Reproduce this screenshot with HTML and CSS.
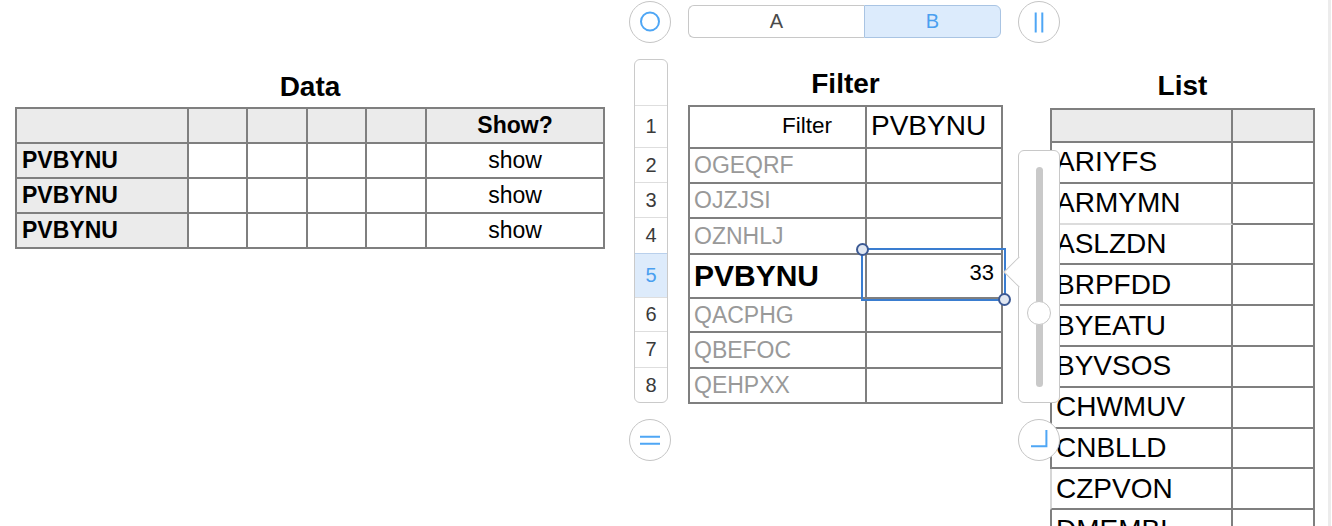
FILE: index.html
```html
<!DOCTYPE html>
<html lang="en">
<head>
<meta charset="utf-8">
<title>Data / Filter / List</title>
<link rel="stylesheet" href="styles.css">
</head>
<body>
<div class="screen">
  <section class="data-col">
    <h2 class="title">Data</h2>
    <div class="data-table">
      <div class="cell shade"></div><div class="cell shade"></div><div class="cell shade"></div><div class="cell shade"></div><div class="cell shade"></div><div class="cell shade bold center">Show?</div>
      <div class="cell shade bold">PVBYNU</div><div class="cell"></div><div class="cell"></div><div class="cell"></div><div class="cell"></div><div class="cell center">show</div>
      <div class="cell shade bold">PVBYNU</div><div class="cell"></div><div class="cell"></div><div class="cell"></div><div class="cell"></div><div class="cell center">show</div>
      <div class="cell shade bold">PVBYNU</div><div class="cell"></div><div class="cell"></div><div class="cell"></div><div class="cell"></div><div class="cell center">show</div>
    </div>
  </section>

  <section class="editor">
    <div class="toolbar">
      <button class="round" type="button" aria-label="Circle">
        <svg width="40" height="40" viewBox="1 1 40 40"><circle cx="21" cy="20.5" r="9" fill="none" stroke="#4ea6f5" stroke-width="2"/></svg>
      </button>
      <div class="segmented">
        <span class="seg seg-a">A</span>
        <span class="seg seg-b">B</span>
      </div>
      <button class="round" type="button" aria-label="Columns">
        <svg width="40" height="40" viewBox="1 1 40 40"><path d="M17.7 11.5 V31.5 M24.3 11.5 V31.5" stroke="#4ea6f5" stroke-width="2" fill="none"/></svg>
      </button>
    </div>

    <div class="workspace">
      <div class="gutter">
        <div class="g-head"></div>
        <div class="g-row">1</div>
        <div class="g-row">2</div>
        <div class="g-row">3</div>
        <div class="g-row">4</div>
        <div class="g-row active">5</div>
        <div class="g-row">6</div>
        <div class="g-row">7</div>
        <div class="g-row">8</div>
      </div>

      <div class="filter-col">
        <h2 class="title">Filter</h2>
        <div class="filter-table">
          <div class="f-cell label">Filter</div>
          <div class="f-cell query">PVBYNU</div>
          <div class="f-cell">OGEQRF</div><div class="f-cell"></div>
          <div class="f-cell">OJZJSI</div><div class="f-cell"></div>
          <div class="f-cell">OZNHLJ</div><div class="f-cell"></div>
          <div class="f-cell match">PVBYNU</div><div class="f-cell value">33</div>
          <div class="f-cell">QACPHG</div><div class="f-cell"></div>
          <div class="f-cell">QBEFOC</div><div class="f-cell"></div>
          <div class="f-cell">QEHPXX</div><div class="f-cell"></div>
          <div class="selection">
            <span class="handle handle-tl"></span>
            <span class="handle handle-br"></span>
          </div>
        </div>
      </div>

      <div class="popover">
        <span class="popover-arrow"></span>
        <div class="track"></div>
        <span class="thumb"></span>
      </div>
    </div>

    <div class="bottombar">
      <button class="round" type="button" aria-label="Rows">
        <svg width="40" height="40" viewBox="1 1 40 40"><path d="M11 17.7 H31 M11 24.7 H31" stroke="#4ea6f5" stroke-width="2" fill="none"/></svg>
      </button>
      <button class="round" type="button" aria-label="Resize">
        <svg width="40" height="40" viewBox="1 1 40 40"><path d="M28.4 11 V27.2 H13" stroke="#4ea6f5" stroke-width="2" fill="none"/></svg>
      </button>
    </div>
  </section>

  <section class="list-col">
    <h2 class="title">List</h2>
    <div class="list-table">
      <div class="l-cell first head"></div><div class="l-cell head"></div>
      <div class="l-cell first">ARIYFS</div><div class="l-cell"></div>
      <div class="l-cell first faint-bottom">ARMYMN</div><div class="l-cell"></div>
      <div class="l-cell first">ASLZDN</div><div class="l-cell"></div>
      <div class="l-cell first">BRPFDD</div><div class="l-cell"></div>
      <div class="l-cell first">BYEATU</div><div class="l-cell"></div>
      <div class="l-cell first">BYVSOS</div><div class="l-cell"></div>
      <div class="l-cell first">CHWMUV</div><div class="l-cell"></div>
      <div class="l-cell first">CNBLLD</div><div class="l-cell"></div>
      <div class="l-cell first faint-left">CZPVON</div><div class="l-cell"></div>
      <div class="l-cell first">DMEMBL</div><div class="l-cell"></div>
    </div>
  </section>

  <div class="scroll-strip"></div>
</div>
</body>
</html>
```

FILE: styles.css
```css
* { box-sizing: border-box; }

html, body {
  margin: 0;
  padding: 0;
  background: #fff;
}

body {
  font-family: "Liberation Sans", Arial, Helvetica, sans-serif;
  color: #000;
}

.screen {
  display: flex;
  align-items: flex-start;
  width: 1332px;
  height: 526px;
  overflow: hidden;
}

.title {
  margin: 0;
  height: 32px;
  line-height: 32px;
  font-size: 28px;
  font-weight: 700;
  text-align: center;
}

/* ---------- Data ---------- */
.data-col {
  flex: none;
  width: 590px;
  margin-left: 15px;
  padding-top: 71px;
}
.data-col .title { margin-bottom: 4px; }

.data-table {
  display: grid;
  grid-template-columns: 170px 57px 58px 57px 58px 176px;
  grid-auto-rows: 33px;
  gap: 2px;
  padding: 2px;
  background: #7f7f7f;
}
.cell {
  background: #fff;
  display: flex;
  align-items: center;
  padding-left: 5px;
  font-size: 23px;
  white-space: nowrap;
}
.cell.shade { background: #ebebeb; }
.cell.bold { font-weight: 700; }
.cell.center { justify-content: center; padding-left: 0; }

/* ---------- Editor ---------- */
.editor {
  flex: none;
  width: 374px;
  margin-left: 24px;
  display: flex;
  flex-direction: column;
  align-items: flex-start;
  position: relative;
  z-index: 2;
}

.toolbar {
  flex: none;
  width: 431px;
  height: 43px;
  display: flex;
  align-items: center;
}

.round {
  flex: none;
  width: 42px;
  height: 42px;
  padding: 0;
  border-radius: 50%;
  border: 1px solid #c5c5c5;
  background: #fff;
  display: flex;
  align-items: center;
  justify-content: center;
}
.round svg { display: block; }

.segmented {
  flex: none;
  display: flex;
  height: 33px;
  margin-left: 17px;
  margin-right: 17px;
  font-size: 20px;
}
.seg {
  display: flex;
  align-items: center;
  justify-content: center;
  height: 33px;
}
.seg-a {
  width: 176px;
  border: 1px solid #c8c8c8;
  border-right: none;
  border-radius: 6px 0 0 6px;
  background: #fff;
  color: #4a4a4a;
}
.seg-b {
  width: 137px;
  border: 1px solid #a9c4e3;
  border-radius: 0 6px 6px 0;
  background: #dcebfc;
  color: #4a9ff0;
}

.workspace {
  flex: none;
  display: flex;
  align-items: flex-start;
  margin-top: 16px;
}

.gutter {
  flex: none;
  width: 34px;
  margin-left: 5px;
  display: grid;
  grid-template-rows: 45px 42px 35px 35px 36px 44px 34px 36px 35px;
  border: 1px solid #cacaca;
  border-radius: 6px;
  overflow: hidden;
  background: #fff;
}
.g-row {
  display: flex;
  align-items: center;
  justify-content: center;
  border-top: 1px solid #dedede;
  font-size: 20px;
  color: #3a3a3a;
}
.g-row.active {
  background: #ddebfb;
  color: #4a9ff0;
  border-top-color: #b9d0ec;
}

.filter-col {
  flex: none;
  width: 315px;
  margin-left: 20px;
  padding-top: 9px;
}
.filter-col .title { margin-bottom: 5px; }

.filter-table {
  position: relative;
  display: grid;
  grid-template-columns: 175px 134px;
  grid-template-rows: 40px 33px 33px 34px 42px 32px 34px 33px;
  gap: 2px;
  padding: 2px;
  background: #7f7f7f;
}
.f-cell {
  background: #fff;
  display: flex;
  align-items: center;
  padding-left: 4px;
  font-size: 23px;
  color: #999;
  white-space: nowrap;
}
.f-cell.label {
  justify-content: flex-end;
  padding-left: 0;
  padding-right: 33px;
  padding-bottom: 3px;
  font-size: 22.5px;
  color: #000;
}
.f-cell.query {
  padding-bottom: 3px;
  font-size: 28px;
  color: #000;
}
.f-cell.match {
  font-size: 30px;
  font-weight: 700;
  color: #000;
}
.f-cell.value {
  justify-content: flex-end;
  padding-right: 7px;
  padding-bottom: 6px;
  font-size: 22px;
  color: #000;
}

.selection {
  position: absolute;
  left: 173px;
  top: 143px;
  width: 145px;
  height: 53px;
  border: 2px solid #3a7dd0;
}
.handle {
  position: absolute;
  width: 13px;
  height: 13px;
  border-radius: 50%;
  background: #e1e7f1;
  border: 2px solid #3d5a94;
}
.handle-tl { left: -7px; top: -7px; }
.handle-br { right: -7px; bottom: -7px; }

.popover {
  flex: none;
  position: relative;
  width: 42px;
  height: 253px;
  margin-left: 15px;
  margin-top: 91px;
  padding: 16px 0 15px;
  display: flex;
  justify-content: center;
  border: 1px solid #c8c8c8;
  border-radius: 6px;
  background: #fff;
}
.popover-arrow {
  position: absolute;
  left: -11px;
  top: 110px;
  width: 22px;
  height: 22px;
  background: #fff;
  border-left: 1px solid #c8c8c8;
  border-bottom: 1px solid #c8c8c8;
  transform: rotate(45deg);
}
.track {
  width: 7px;
  border-radius: 4px;
  background: #c9c9c9;
}
.thumb {
  position: absolute;
  left: 8px;
  top: 150px;
  width: 24px;
  height: 24px;
  border-radius: 50%;
  background: #fff;
  border: 1px solid #c6c6c6;
}

.bottombar {
  flex: none;
  width: 431px;
  margin-top: 15px;
  display: flex;
  justify-content: space-between;
}

/* ---------- List ---------- */
.list-col {
  flex: none;
  width: 265px;
  margin-left: 47px;
  padding-top: 70px;
}
.list-col .title { margin-bottom: 6px; }

.list-table {
  display: grid;
  grid-template-columns: 183px 82px;
  grid-template-rows: 35px;
  grid-auto-rows: 40.8px;
}
.l-cell {
  display: flex;
  align-items: center;
  padding-left: 4px;
  font-size: 28px;
  white-space: nowrap;
  background: #fff;
  border-right: 2px solid #7f7f7f;
  border-bottom: 2px solid #7f7f7f;
}
.l-cell.first { border-left: 2px solid #7f7f7f; }
.l-cell.head {
  border-top: 2px solid #7f7f7f;
  background: #ebebeb;
}
.l-cell.faint-bottom { border-bottom-color: #dcdcdc; }
.l-cell.faint-left { border-left-color: #d6d6d6; }

.scroll-strip {
  flex: none;
  align-self: stretch;
  width: 3px;
  margin-left: 13px;
  background: #ececec;
}
```
